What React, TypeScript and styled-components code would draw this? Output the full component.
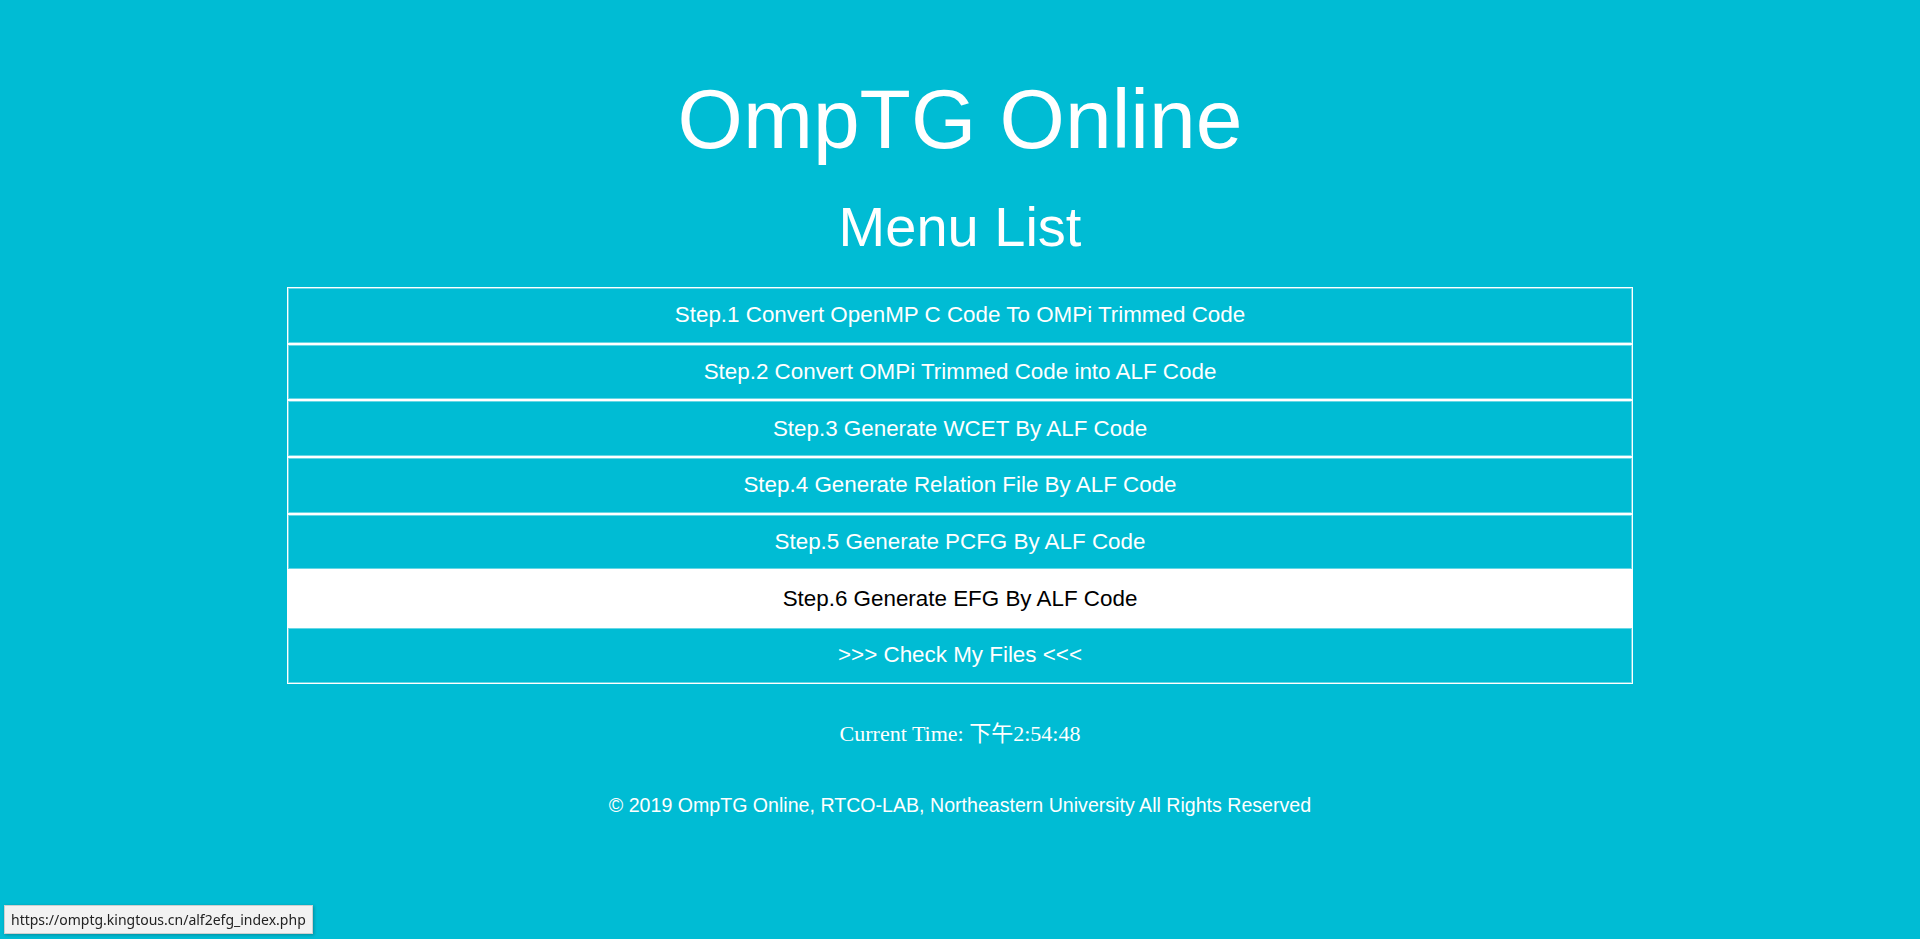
import React from 'react'
import styled, { createGlobalStyle } from 'styled-components'

const GlobalStyle = createGlobalStyle`
  html, body {
    margin: 0;
    padding: 0;
    background: #00bcd4;
  }
  body {
    min-height: 939px;
    font-family: 'Liberation Sans', Arial, sans-serif;
    color: #fff;
  }
`

const Page = styled.div`
  display: flex;
  flex-direction: column;
  align-items: center;
  min-height: 939px;
  background: #00bcd4;
`

const Title = styled.h1`
  margin: 77px 0 0;
  font-size: 84px;
  line-height: 84px;
  font-weight: 400;
`

const SubTitle = styled.h2`
  margin: 38px 0 0;
  font-size: 56px;
  line-height: 56px;
  font-weight: 400;
`

const MenuList = styled.ul`
  list-style: none;
  margin: 32px 0 0;
  padding: 0;
  width: 70%;
  display: flex;
  flex-direction: column;
  gap: 2px;
  border: 1px solid #fff;
  background: #fff;
`

const MenuItem = styled.li<{ $active?: boolean }>`
  box-sizing: border-box;
  height: 54.7px;
  display: flex;
  align-items: center;
  justify-content: center;
  font-size: 22.4px;
  background: ${(p) => (p.$active ? '#fff' : '#00bcd4')};
  color: ${(p) => (p.$active ? '#000' : '#fff')};
  border: 1px solid ${(p) => (p.$active ? '#fff' : 'rgba(255, 255, 255, 0.4)')};
  cursor: pointer;
`

const Clock = styled.div`
  margin-top: 36px;
  font-family: 'Liberation Serif', 'Times New Roman', 'Noto Sans CJK SC', serif;
  font-size: 22px;
  line-height: 22px;
`

const Cjk = styled.span`
  font-family: 'Noto Sans CJK SC', sans-serif;
`

const Footer = styled.footer`
  margin-top: 50px;
  font-size: 19.6px;
  line-height: 20px;
`

const StatusBubble = styled.div`
  position: fixed;
  left: 4px;
  bottom: 5px;
  height: 29px;
  box-sizing: border-box;
  padding: 0 6px;
  display: flex;
  align-items: center;
  font-family: 'Noto Sans', 'Open Sans', sans-serif;
  font-size: 14px;
  color: #222;
  background: #f2f2f2;
  border: 1px solid #cfcfcf;
  box-shadow: 1px 1px 3px rgba(0, 0, 0, 0.25);
`

const steps = [
  'Step.1 Convert OpenMP C Code To OMPi Trimmed Code',
  'Step.2 Convert OMPi Trimmed Code into ALF Code',
  'Step.3 Generate WCET By ALF Code',
  'Step.4 Generate Relation File By ALF Code',
  'Step.5 Generate PCFG By ALF Code',
  'Step.6 Generate EFG By ALF Code',
  '>>> Check My Files <<<',
]

const App: React.FC = () => {
  return (
    <Page>
      <GlobalStyle />
      <Title>OmpTG Online</Title>
      <SubTitle>Menu List</SubTitle>
      <MenuList>
        {steps.map((s, i) => (
          <MenuItem key={s} $active={i === 5}>
            {s}
          </MenuItem>
        ))}
      </MenuList>
      <Clock>
        Current Time: <Cjk>下午</Cjk>2:54:48
      </Clock>
      <Footer>© 2019 OmpTG Online, RTCO-LAB, Northeastern University All Rights Reserved</Footer>
      <StatusBubble>https://omptg.kingtous.cn/alf2efg_index.php</StatusBubble>
    </Page>
  )
}

export default App
